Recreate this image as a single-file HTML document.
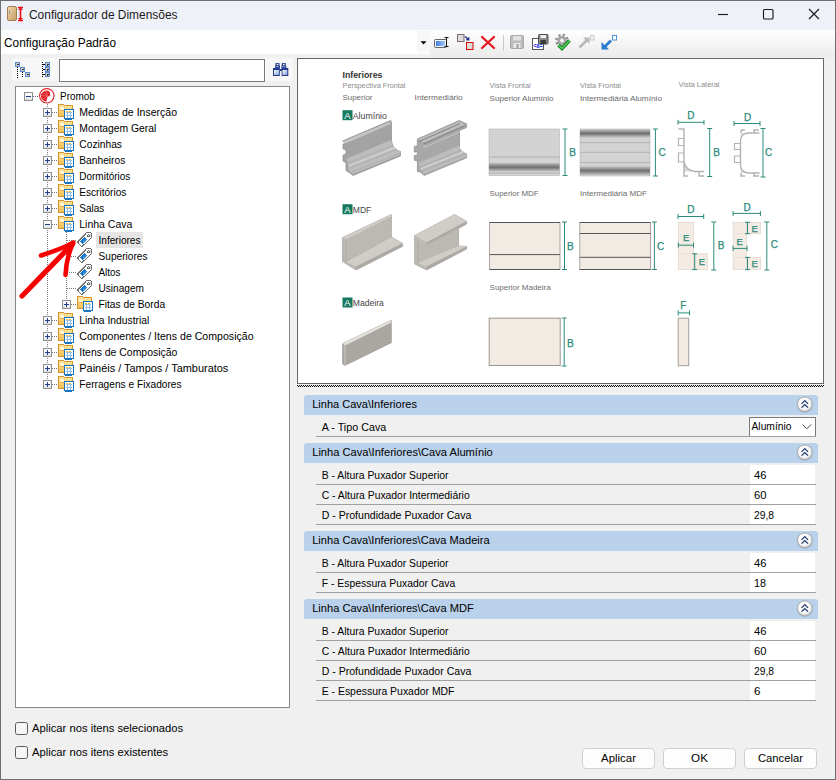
<!DOCTYPE html><html><head><meta charset="utf-8"><style>html,body{margin:0;padding:0;background:#f0f0f0;width:836px;height:780px;overflow:hidden}svg{display:block}text{font-family:"Liberation Sans",sans-serif}</style></head><body>
<svg width="836" height="780" viewBox="0 0 836 780" shape-rendering="crispEdges">
<defs><linearGradient id="tbg" x1="0" y1="0" x2="0" y2="1"><stop offset="0" stop-color="#ffffff"/><stop offset="1" stop-color="#ebebeb"/></linearGradient><linearGradient id="boxg" x1="0" y1="0" x2="0" y2="1"><stop offset="0" stop-color="#ffffff"/><stop offset="0.5" stop-color="#f3f3f3"/><stop offset="1" stop-color="#dcdcdc"/></linearGradient><pattern id="chk" width="2" height="2" patternUnits="userSpaceOnUse"><rect x="0" y="0" width="1" height="1" fill="#000"/><rect x="1" y="1" width="1" height="1" fill="#000"/></pattern></defs>
<rect x="0" y="0" width="836" height="780" fill="#f0f0f0"/>
<rect x="0" y="0" width="836" height="30" fill="#eff1f8"/>
<rect x="0" y="30" width="836" height="24" fill="#ffffff"/>
<rect x="430" y="30" width="406" height="27" fill="url(#tbg)"/>
<rect x="0.5" y="0.5" width="835" height="779" fill="none" stroke="#6f6f6f" stroke-width="1"/>
<defs><linearGradient id="door" x1="0" y1="0" x2="1" y2="1"><stop offset="0" stop-color="#f3dcb2"/><stop offset="1" stop-color="#c49a62"/></linearGradient></defs>
<rect x="7.5" y="6.5" width="9" height="14" fill="url(#door)" stroke="#a0804f" stroke-width="1" rx="1.5" shape-rendering="geometricPrecision"/>
<rect x="9" y="9.5" width="1.2" height="4" fill="#9aa0a8"/>
<path d="M18 7.5h5M18 20.5h5M20.5 7.5v13" stroke="#e8101a" stroke-width="1.6" fill="none" shape-rendering="geometricPrecision"/>
<path d="M18 10l2.5-2.5 2.5 2.5zM18 18l2.5 2.5 2.5-2.5z" fill="#e8101a" shape-rendering="geometricPrecision"/>
<text x="29" y="19.2" font-size="12" fill="#1b1b1b" textLength="148.5" lengthAdjust="spacingAndGlyphs">Configurador de Dimensões</text>
<g stroke="#1b1b1b" stroke-width="1.15" fill="none" shape-rendering="geometricPrecision"><path d="M718 14.5h10"/><rect x="763.5" y="9.5" width="9.5" height="9.5" rx="1"/><path d="M809 9l10 10M819 9l-10 10"/></g>
<text x="4" y="47" font-size="12" fill="#000" textLength="112" lengthAdjust="spacingAndGlyphs">Configuração Padrão</text>
<rect x="417" y="31" width="13" height="22" fill="#f7f7f7"/>
<path d="M420.5 41.2h6l-3 3.4z" fill="#000" shape-rendering="geometricPrecision"/>
<g shape-rendering="geometricPrecision">
<defs><linearGradient id="blu" x1="0" y1="0" x2="1" y2="0"><stop offset="0" stop-color="#3d7be0"/><stop offset="1" stop-color="#a9c8f5"/></linearGradient></defs>
<rect x="434.5" y="39.5" width="12" height="8" fill="#f4f6fa" stroke="#5d6570" stroke-width="1" rx="1"/>
<rect x="436" y="41" width="9" height="5" fill="url(#blu)"/>
<path d="M444.5 37.5h4M444.5 46.5h4M446.5 37.5v9" stroke="#111" stroke-width="1" fill="none"/>
<rect x="457.5" y="34.5" width="6.5" height="7" fill="#dcdcdc" stroke="#7a6a70" stroke-width="1"/>
<rect x="466.5" y="42.5" width="6.5" height="7" fill="#dcdcdc" stroke="#e00000" stroke-width="1"/>
<path d="M465 36.5l3.5 3M468.8 37.3v2.6h-2.6" stroke="#1a2d8a" stroke-width="1.2" fill="none"/>
<path d="M482 37l12 11M494 37l-12 11" stroke="#e8121c" stroke-width="2.2" fill="none" stroke-linecap="round"/>
<line x1="503.5" y1="35" x2="503.5" y2="51" stroke="#c8c8c8" stroke-width="1"/>
<rect x="510.5" y="35.5" width="13" height="13" fill="#bdbdbd" stroke="#a8a8a8" stroke-width="1" rx="1.5"/>
<rect x="513" y="36" width="8" height="4.5" fill="#e2e2e2"/>
<rect x="513.5" y="43" width="7" height="5" fill="#e8e8e8"/>
<rect x="516.5" y="44" width="2" height="4" fill="#a0a0a0"/>
<rect x="532.5" y="38.5" width="11" height="11" fill="#ffffff" stroke="#555" stroke-width="1"/>
<text x="533.5" y="48" font-size="6.5" fill="#1530e0" font-weight="bold" textLength="9" lengthAdjust="spacingAndGlyphs">&lt;a=</text>
<rect x="538.5" y="34.5" width="9.5" height="9.5" fill="#8c8c8c" stroke="#4a4a4a" stroke-width="1" rx="1"/>
<rect x="540.5" y="35" width="5.5" height="3" fill="#f0f0f0"/>
<rect x="540.5" y="40" width="5.5" height="4" fill="#3a3a3a"/>
<circle cx="562" cy="40.5" r="5.6" fill="none" stroke="#8f8f8f" stroke-width="2.4" stroke-dasharray="2.2 2.2"/>
<circle cx="562" cy="40.5" r="4.6" fill="#a5a5a5"/><circle cx="562" cy="40.5" r="1.9" fill="#f4f4f4"/>
<path d="M558.5 45l3.5 3.5 7.5-8" stroke="#0d7d19" stroke-width="3.4" fill="none"/>
<path d="M558.5 45l3.5 3.5 7.5-8" stroke="#5ad35e" stroke-width="1.5" fill="none"/>
<path d="M579.5 47.5l8-8" stroke="#b8b8b8" stroke-width="2.6"/><path d="M583 37.5h6.5v6.5z" fill="#b8b8b8"/>
<rect x="590.5" y="35.5" width="3.5" height="4.5" fill="#f2f2f2" stroke="#c9c9c9" stroke-width="1"/>
<path d="M611 40.5l-7.5 7.5" stroke="#2a7ad2" stroke-width="2.8"/><path d="M601.5 42v7.5h7.5z" fill="#2a7ad2"/>
<rect x="612.5" y="35.5" width="4" height="4.5" fill="#ffffff" stroke="#4c8fe0" stroke-width="1"/>
</g>
<rect x="12" y="58" width="281" height="23" fill="#f7f7f7" rx="3"/>
<g shape-rendering="crispEdges">
<path d="M17.5 67v11M22.5 72v6" stroke="#000" stroke-width="1" stroke-dasharray="1 1"/>
<path d="M42.5 62v16" stroke="#000" stroke-width="1" stroke-dasharray="1 1"/>
<rect x="15.5" y="62.5" width="4" height="4" fill="#cfcab8" stroke="#5a8ad0" stroke-width="1"/>
<line x1="16.5" y1="64.5" x2="18.5" y2="64.5" stroke="#333" stroke-width="1"/>
<rect x="20.5" y="67.5" width="4" height="4" fill="#cfcab8" stroke="#5a8ad0" stroke-width="1"/>
<line x1="21.5" y1="69.5" x2="23.5" y2="69.5" stroke="#333" stroke-width="1"/>
<rect x="25.5" y="72.5" width="4" height="4" fill="#cfcab8" stroke="#5a8ad0" stroke-width="1"/>
<line x1="26.5" y1="74.5" x2="28.5" y2="74.5" stroke="#333" stroke-width="1"/>
<rect x="45.5" y="62.5" width="4" height="4" fill="#cfcab8" stroke="#5a8ad0" stroke-width="1"/>
<line x1="46.5" y1="64.5" x2="48.5" y2="64.5" stroke="#333" stroke-width="1"/>
<line x1="47.5" y1="63.5" x2="47.5" y2="65.5" stroke="#333" stroke-width="1"/>
<rect x="45.5" y="67.5" width="4" height="4" fill="#cfcab8" stroke="#5a8ad0" stroke-width="1"/>
<line x1="46.5" y1="69.5" x2="48.5" y2="69.5" stroke="#333" stroke-width="1"/>
<line x1="47.5" y1="68.5" x2="47.5" y2="70.5" stroke="#333" stroke-width="1"/>
<rect x="45.5" y="72.5" width="4" height="4" fill="#cfcab8" stroke="#5a8ad0" stroke-width="1"/>
<line x1="46.5" y1="74.5" x2="48.5" y2="74.5" stroke="#333" stroke-width="1"/>
<line x1="47.5" y1="73.5" x2="47.5" y2="75.5" stroke="#333" stroke-width="1"/>
<path d="M43 64.5h2M43 69.5h2M43 74.5h2" stroke="#000" stroke-width="1"/>
</g>
<rect x="59.5" y="59.5" width="205" height="22" fill="#ffffff" stroke="#7a7a7a" stroke-width="1"/>
<defs><linearGradient id="bino" x1="0" y1="0" x2="1" y2="1"><stop offset="0" stop-color="#ffffff"/><stop offset="1" stop-color="#7f9ad8"/></linearGradient></defs>
<g shape-rendering="geometricPrecision"><path d="M275.5 63h4v2.5h0.5v2.5h-0.2v8h-6.8v-8h2v-2.5h0.5z" fill="#213c8c"/><path d="M281.8 63h4v2.5h0.5v2.5h2v8h-6.7v-8h-0.3v-2.5h0.5z" fill="#213c8c"/><rect x="274" y="70" width="5" height="5" fill="url(#bino)"/><rect x="282.5" y="70" width="4.8" height="5" fill="url(#bino)"/><rect x="276.8" y="63.8" width="1.6" height="1.4" fill="#fff"/><rect x="283" y="63.8" width="1.6" height="1.4" fill="#fff"/><rect x="275.5" y="66.2" width="3.5" height="1" fill="#8fa6dc"/><rect x="282" y="66.2" width="3.5" height="1" fill="#8fa6dc"/><rect x="279.5" y="69" width="2.5" height="2" fill="#213c8c"/></g>
<rect x="15.5" y="86.5" width="274" height="621" fill="#ffffff" stroke="#828790" stroke-width="1"/>
<defs><linearGradient id="fold" x1="0" y1="0" x2="0" y2="1"><stop offset="0" stop-color="#fce9a4"/><stop offset="1" stop-color="#f2c257"/></linearGradient><symbol id="folder" viewBox="0 0 16 16"><path d="M0.5 0.5h5.2l1 1.2h7.3v10.3h-13.5z" fill="url(#fold)" stroke="#d8922c" stroke-width="1"/><path d="M1.5 6.5h12" stroke="#e9a94a" stroke-width="1"/><path d="M1.5 2.5h4v3h-4z" fill="#fff6c8"/><rect x="6.25" y="5.25" width="9" height="9.5" rx="1" fill="#ffffff" stroke="#1677c4" stroke-width="1.5"/><path d="M8 8.5h6M8 11.5h6M9 7.5v6M12.5 7.5v6" stroke="#96bde6" stroke-width="1"/><path d="M8 7.3h1.8M10.8 7.3h2.5" stroke="#f3b92a" stroke-width="1"/></symbol><symbol id="tag" viewBox="0 0 16 16"><path d="M0.5 10.1 L9 1.3 Q9.3 0.8 10 0.8 L13.8 0.8 Q14.5 0.8 14.5 1.5 L14.5 5.3 Q14.5 5.8 14 6.2 L4.8 14.8 Z" fill="#ffffff" stroke="#6e6e6e" stroke-width="1" stroke-linejoin="round"/><path d="M10 1.5 L14 1.5 L14 5.5 Z" fill="#dedede"/><path d="M3 9.8 L7.5 5.3 L10 7.8 L5.5 12.3 Z" fill="#1677cc"/><path d="M4.5 10 L8 6.5 M5.5 11 L9 7.5" stroke="#7cc0f5" stroke-width="0.6"/><circle cx="11.4" cy="3.6" r="1.2" fill="#fff" stroke="#555" stroke-width="0.9"/></symbol><symbol id="plus" viewBox="0 0 9 9"><rect x="0.5" y="0.5" width="8" height="8" rx="1" fill="url(#boxg)" stroke="#8e8f8f" stroke-width="1"/><path d="M2 4.5h5M4.5 2v5" stroke="#1f3f8a" stroke-width="1"/></symbol><symbol id="minus" viewBox="0 0 9 9"><rect x="0.5" y="0.5" width="8" height="8" rx="1" fill="url(#boxg)" stroke="#8e8f8f" stroke-width="1"/><path d="M2 4.5h5" stroke="#1f3f8a" stroke-width="1"/></symbol></defs>
<g stroke="#7a7a7a" stroke-width="1" fill="none" stroke-dasharray="1 1">
<path d="M47.5 104v280"/>
<path d="M33 96.5h6"/>
<path d="M66.5 232v72"/>
</g>
<g stroke="#7a7a7a" stroke-width="1" fill="none" stroke-dasharray="1 1">
<path d="M52 112.5h6"/>
<path d="M52 128.5h6"/>
<path d="M52 144.5h6"/>
<path d="M52 160.5h6"/>
<path d="M52 176.5h6"/>
<path d="M52 192.5h6"/>
<path d="M52 208.5h6"/>
<path d="M52 224.5h6"/>
<path d="M67 240.5h10"/>
<path d="M67 256.5h10"/>
<path d="M67 272.5h10"/>
<path d="M67 288.5h10"/>
<path d="M71 304.5h6"/>
<path d="M52 320.5h6"/>
<path d="M52 336.5h6"/>
<path d="M52 352.5h6"/>
<path d="M52 368.5h6"/>
<path d="M52 384.5h6"/>
</g>
<use href="#minus" x="24" y="92" width="9" height="9"/>
<text x="60" y="99.7" font-size="11.5" fill="#000" textLength="34.8" lengthAdjust="spacingAndGlyphs">Promob</text>
<use href="#plus" x="43" y="108" width="9" height="9"/>
<use href="#folder" x="58" y="104" width="16" height="16"/>
<text x="79.3" y="115.7" font-size="11.5" fill="#000" textLength="97.7" lengthAdjust="spacingAndGlyphs">Medidas de Inserção</text>
<use href="#plus" x="43" y="124" width="9" height="9"/>
<use href="#folder" x="58" y="120" width="16" height="16"/>
<text x="79.3" y="131.7" font-size="11.5" fill="#000" textLength="77" lengthAdjust="spacingAndGlyphs">Montagem Geral</text>
<use href="#plus" x="43" y="140" width="9" height="9"/>
<use href="#folder" x="58" y="136" width="16" height="16"/>
<text x="79.3" y="147.7" font-size="11.5" fill="#000" textLength="42.7" lengthAdjust="spacingAndGlyphs">Cozinhas</text>
<use href="#plus" x="43" y="156" width="9" height="9"/>
<use href="#folder" x="58" y="152" width="16" height="16"/>
<text x="79.3" y="163.7" font-size="11.5" fill="#000" textLength="46" lengthAdjust="spacingAndGlyphs">Banheiros</text>
<use href="#plus" x="43" y="172" width="9" height="9"/>
<use href="#folder" x="58" y="168" width="16" height="16"/>
<text x="79.3" y="179.7" font-size="11.5" fill="#000" textLength="51" lengthAdjust="spacingAndGlyphs">Dormitórios</text>
<use href="#plus" x="43" y="188" width="9" height="9"/>
<use href="#folder" x="58" y="184" width="16" height="16"/>
<text x="79.3" y="195.7" font-size="11.5" fill="#000" textLength="47" lengthAdjust="spacingAndGlyphs">Escritórios</text>
<use href="#plus" x="43" y="204" width="9" height="9"/>
<use href="#folder" x="58" y="200" width="16" height="16"/>
<text x="79.3" y="211.7" font-size="11.5" fill="#000" textLength="25" lengthAdjust="spacingAndGlyphs">Salas</text>
<use href="#minus" x="43" y="220" width="9" height="9"/>
<use href="#folder" x="58" y="216" width="16" height="16"/>
<text x="79.3" y="227.7" font-size="11.5" fill="#000" textLength="53" lengthAdjust="spacingAndGlyphs">Linha Cava</text>
<rect x="96" y="232" width="47" height="16" fill="#e5e5e5"/>
<use href="#tag" x="77" y="232" width="16" height="16"/>
<text x="98.5" y="243.7" font-size="11.5" fill="#000" textLength="42" lengthAdjust="spacingAndGlyphs">Inferiores</text>
<use href="#tag" x="77" y="248" width="16" height="16"/>
<text x="98.5" y="259.7" font-size="11.5" fill="#000" textLength="49" lengthAdjust="spacingAndGlyphs">Superiores</text>
<use href="#tag" x="77" y="264" width="16" height="16"/>
<text x="98.5" y="275.7" font-size="11.5" fill="#000" textLength="22" lengthAdjust="spacingAndGlyphs">Altos</text>
<use href="#tag" x="77" y="280" width="16" height="16"/>
<text x="98.5" y="291.7" font-size="11.5" fill="#000" textLength="45.5" lengthAdjust="spacingAndGlyphs">Usinagem</text>
<use href="#plus" x="62" y="300" width="9" height="9"/>
<use href="#folder" x="77" y="296" width="16" height="16"/>
<text x="98.5" y="307.7" font-size="11.5" fill="#000" textLength="66.6" lengthAdjust="spacingAndGlyphs">Fitas de Borda</text>
<use href="#plus" x="43" y="316" width="9" height="9"/>
<use href="#folder" x="58" y="312" width="16" height="16"/>
<text x="79.3" y="323.7" font-size="11.5" fill="#000" textLength="70" lengthAdjust="spacingAndGlyphs">Linha Industrial</text>
<use href="#plus" x="43" y="332" width="9" height="9"/>
<use href="#folder" x="58" y="328" width="16" height="16"/>
<text x="79.3" y="339.7" font-size="11.5" fill="#000" textLength="174.3" lengthAdjust="spacingAndGlyphs">Componentes / Itens de Composição</text>
<use href="#plus" x="43" y="348" width="9" height="9"/>
<use href="#folder" x="58" y="344" width="16" height="16"/>
<text x="79.3" y="355.7" font-size="11.5" fill="#000" textLength="98" lengthAdjust="spacingAndGlyphs">Itens de Composição</text>
<use href="#plus" x="43" y="364" width="9" height="9"/>
<use href="#folder" x="58" y="360" width="16" height="16"/>
<text x="79.3" y="371.7" font-size="11.5" fill="#000" textLength="149" lengthAdjust="spacingAndGlyphs">Painéis / Tampos / Tamburatos</text>
<use href="#plus" x="43" y="380" width="9" height="9"/>
<use href="#folder" x="58" y="376" width="16" height="16"/>
<text x="79.3" y="387.7" font-size="11.5" fill="#000" textLength="102.3" lengthAdjust="spacingAndGlyphs">Ferragens e Fixadores</text>
<g shape-rendering="geometricPrecision"><circle cx="46.8" cy="95.8" r="7.2" fill="#fff" stroke="#e0242b" stroke-width="1.1"/><path d="M46.4 101.5 C43 101 41 98.5 41 96 C41 93 43.5 90.8 47 90.6 L49 91.2 L50.3 92.5 L49.8 93.8 L50.4 95 L49.2 96.4 L47.8 96.3 L47.2 98 Z" fill="#e0242b"/><path d="M47.5 96 L43 92.5 M47.5 96 L41.8 95.5 M47.5 96 L42.5 99.5 M47.5 96 L46 91" stroke="#f58080" stroke-width="0.5"/></g>
<g shape-rendering="geometricPrecision" fill="none" stroke="#f70000" stroke-linecap="round" stroke-linejoin="round"><path d="M22 296 L72.5 244" stroke-width="5.2"/><path d="M73 243 C63 248 52 252 41 255.5" stroke-width="4.6"/><path d="M73 243 C69 252 66 262 65.5 275" stroke-width="4.6"/><path d="M74 242 L69 244 L71.5 247 Z" stroke-width="3" fill="#f70000"/></g>
<rect x="15.5" y="722.5" width="12" height="12" fill="#f6f6f6" stroke="#5a5a5a" stroke-width="1" rx="2" shape-rendering="geometricPrecision"/>
<text x="32" y="731.7" font-size="11.5" fill="#000" textLength="151" lengthAdjust="spacingAndGlyphs">Aplicar nos itens selecionados</text>
<rect x="15.5" y="746.5" width="12" height="12" fill="#f6f6f6" stroke="#5a5a5a" stroke-width="1" rx="2" shape-rendering="geometricPrecision"/>
<text x="32" y="755.7" font-size="11.5" fill="#000" textLength="136.2" lengthAdjust="spacingAndGlyphs">Aplicar nos itens existentes</text>
<defs><radialGradient id="cbtn" cx="0.4" cy="0.35" r="0.7"><stop offset="0" stop-color="#ffffff"/><stop offset="0.7" stop-color="#f4f4f4"/><stop offset="1" stop-color="#d5d5d5"/></radialGradient></defs>
<path d="M304 415 V398 Q304 395 307 395 H815 Q818 395 818 398 V415 Z" fill="#b9d1ea" shape-rendering="geometricPrecision"/>
<text x="312.2" y="408.3" font-size="11.5" fill="#000" textLength="104.8" lengthAdjust="spacingAndGlyphs">Linha Cava\Inferiores</text>
<g shape-rendering="geometricPrecision"><circle cx="804.8" cy="404.8" r="8.1" fill="#8d99a8" opacity="0.45"/><circle cx="804.8" cy="404.2" r="7.3" fill="url(#cbtn)" stroke="#a9a9a9" stroke-width="0.9"/><path d="M801.5999999999999 403.9 L804.8 400.7 L808.0 403.9 M801.5999999999999 407.7 L804.8 404.5 L808.0 407.7" stroke="#1d3470" stroke-width="1.2" fill="none"/></g>
<rect x="749.5" y="417.5" width="66" height="19" fill="#ffffff" stroke="#7a7a7a" stroke-width="1"/>
<text x="751.5" y="430.3" font-size="11.5" fill="#000" textLength="40" lengthAdjust="spacingAndGlyphs">Alumínio</text>
<path d="M802.5 424.5 l4.3 4.3 l4.3 -4.3" stroke="#444" stroke-width="1" fill="none" shape-rendering="geometricPrecision"/>
<text x="321.7" y="430.9" font-size="11.5" fill="#000" textLength="64.6" lengthAdjust="spacingAndGlyphs">A - Tipo Cava</text>
<line x1="316" y1="436.5" x2="816" y2="436.5" stroke="#a0a0a0" stroke-width="1"/>
<path d="M304 463 V446 Q304 443 307 443 H815 Q818 443 818 446 V463 Z" fill="#b9d1ea" shape-rendering="geometricPrecision"/>
<text x="312.2" y="456.3" font-size="11.5" fill="#000" textLength="180.6" lengthAdjust="spacingAndGlyphs">Linha Cava\Inferiores\Cava Alumínio</text>
<g shape-rendering="geometricPrecision"><circle cx="804.8" cy="452.8" r="8.1" fill="#8d99a8" opacity="0.45"/><circle cx="804.8" cy="452.2" r="7.3" fill="url(#cbtn)" stroke="#a9a9a9" stroke-width="0.9"/><path d="M801.5999999999999 451.9 L804.8 448.7 L808.0 451.9 M801.5999999999999 455.7 L804.8 452.5 L808.0 455.7" stroke="#1d3470" stroke-width="1.2" fill="none"/></g>
<rect x="750" y="465" width="65" height="19" fill="#ffffff"/>
<text x="754" y="478.7" font-size="11.5" fill="#000" textLength="12.5" lengthAdjust="spacingAndGlyphs">46</text>
<text x="321.7" y="478.9" font-size="11.5" fill="#000" textLength="126.8" lengthAdjust="spacingAndGlyphs">B - Altura Puxador Superior</text>
<line x1="316" y1="484.5" x2="816" y2="484.5" stroke="#a0a0a0" stroke-width="1"/>
<rect x="750" y="485" width="65" height="19" fill="#ffffff"/>
<text x="754" y="498.7" font-size="11.5" fill="#000" textLength="12.5" lengthAdjust="spacingAndGlyphs">60</text>
<text x="321.7" y="498.9" font-size="11.5" fill="#000" textLength="148" lengthAdjust="spacingAndGlyphs">C - Altura Puxador Intermediário</text>
<line x1="316" y1="504.5" x2="816" y2="504.5" stroke="#a0a0a0" stroke-width="1"/>
<rect x="750" y="505" width="65" height="19" fill="#ffffff"/>
<text x="754" y="518.7" font-size="11.5" fill="#000" textLength="20" lengthAdjust="spacingAndGlyphs">29,8</text>
<text x="321.7" y="518.9" font-size="11.5" fill="#000" textLength="149.6" lengthAdjust="spacingAndGlyphs">D - Profundidade Puxador Cava</text>
<line x1="316" y1="524.5" x2="816" y2="524.5" stroke="#a0a0a0" stroke-width="1"/>
<path d="M304 551 V534 Q304 531 307 531 H815 Q818 531 818 534 V551 Z" fill="#b9d1ea" shape-rendering="geometricPrecision"/>
<text x="312.2" y="544.3" font-size="11.5" fill="#000" textLength="177.5" lengthAdjust="spacingAndGlyphs">Linha Cava\Inferiores\Cava Madeira</text>
<g shape-rendering="geometricPrecision"><circle cx="804.8" cy="540.8000000000001" r="8.1" fill="#8d99a8" opacity="0.45"/><circle cx="804.8" cy="540.2" r="7.3" fill="url(#cbtn)" stroke="#a9a9a9" stroke-width="0.9"/><path d="M801.5999999999999 539.9000000000001 L804.8 536.7 L808.0 539.9000000000001 M801.5999999999999 543.7 L804.8 540.5 L808.0 543.7" stroke="#1d3470" stroke-width="1.2" fill="none"/></g>
<rect x="750" y="553" width="65" height="19" fill="#ffffff"/>
<text x="754" y="566.7" font-size="11.5" fill="#000" textLength="12.5" lengthAdjust="spacingAndGlyphs">46</text>
<text x="321.7" y="566.9" font-size="11.5" fill="#000" textLength="126.8" lengthAdjust="spacingAndGlyphs">B - Altura Puxador Superior</text>
<line x1="316" y1="572.5" x2="816" y2="572.5" stroke="#a0a0a0" stroke-width="1"/>
<rect x="750" y="573" width="65" height="19" fill="#ffffff"/>
<text x="754" y="586.7" font-size="11.5" fill="#000" textLength="12" lengthAdjust="spacingAndGlyphs">18</text>
<text x="321.7" y="586.9" font-size="11.5" fill="#000" textLength="133.5" lengthAdjust="spacingAndGlyphs">F - Espessura Puxador Cava</text>
<line x1="316" y1="592.5" x2="816" y2="592.5" stroke="#a0a0a0" stroke-width="1"/>
<path d="M304 619 V602 Q304 599 307 599 H815 Q818 599 818 602 V619 Z" fill="#b9d1ea" shape-rendering="geometricPrecision"/>
<text x="312.2" y="612.3" font-size="11.5" fill="#000" textLength="161.5" lengthAdjust="spacingAndGlyphs">Linha Cava\Inferiores\Cava MDF</text>
<g shape-rendering="geometricPrecision"><circle cx="804.8" cy="608.8000000000001" r="8.1" fill="#8d99a8" opacity="0.45"/><circle cx="804.8" cy="608.2" r="7.3" fill="url(#cbtn)" stroke="#a9a9a9" stroke-width="0.9"/><path d="M801.5999999999999 607.9000000000001 L804.8 604.7 L808.0 607.9000000000001 M801.5999999999999 611.7 L804.8 608.5 L808.0 611.7" stroke="#1d3470" stroke-width="1.2" fill="none"/></g>
<rect x="750" y="621" width="65" height="19" fill="#ffffff"/>
<text x="754" y="634.7" font-size="11.5" fill="#000" textLength="12.5" lengthAdjust="spacingAndGlyphs">46</text>
<text x="321.7" y="634.9" font-size="11.5" fill="#000" textLength="126.8" lengthAdjust="spacingAndGlyphs">B - Altura Puxador Superior</text>
<line x1="316" y1="640.5" x2="816" y2="640.5" stroke="#a0a0a0" stroke-width="1"/>
<rect x="750" y="641" width="65" height="19" fill="#ffffff"/>
<text x="754" y="654.7" font-size="11.5" fill="#000" textLength="12.5" lengthAdjust="spacingAndGlyphs">60</text>
<text x="321.7" y="654.9" font-size="11.5" fill="#000" textLength="148" lengthAdjust="spacingAndGlyphs">C - Altura Puxador Intermediário</text>
<line x1="316" y1="660.5" x2="816" y2="660.5" stroke="#a0a0a0" stroke-width="1"/>
<rect x="750" y="661" width="65" height="19" fill="#ffffff"/>
<text x="754" y="674.7" font-size="11.5" fill="#000" textLength="20" lengthAdjust="spacingAndGlyphs">29,8</text>
<text x="321.7" y="674.9" font-size="11.5" fill="#000" textLength="149.6" lengthAdjust="spacingAndGlyphs">D - Profundidade Puxador Cava</text>
<line x1="316" y1="680.5" x2="816" y2="680.5" stroke="#a0a0a0" stroke-width="1"/>
<rect x="750" y="681" width="65" height="19" fill="#ffffff"/>
<text x="754" y="694.7" font-size="11.5" fill="#000" textLength="6.5" lengthAdjust="spacingAndGlyphs">6</text>
<text x="321.7" y="694.9" font-size="11.5" fill="#000" textLength="132.8" lengthAdjust="spacingAndGlyphs">E - Espessura Puxador MDF</text>
<line x1="316" y1="700.5" x2="816" y2="700.5" stroke="#a0a0a0" stroke-width="1"/>
<rect x="297" y="385" width="527" height="2" fill="url(#chk)"/>
<rect x="582.5" y="748.5" width="72" height="20" fill="#fdfdfd" stroke="#d0d0d0" stroke-width="1" rx="3.5" shape-rendering="geometricPrecision"/>
<text x="618.5" y="761.8" font-size="11.5" fill="#000" text-anchor="middle" textLength="35" lengthAdjust="spacingAndGlyphs">Aplicar</text>
<rect x="663.5" y="748.5" width="72" height="20" fill="#fdfdfd" stroke="#d0d0d0" stroke-width="1" rx="3.5" shape-rendering="geometricPrecision"/>
<text x="699.5" y="761.8" font-size="11.5" fill="#000" text-anchor="middle" textLength="16.8" lengthAdjust="spacingAndGlyphs">OK</text>
<rect x="744.5" y="748.5" width="72" height="20" fill="#fdfdfd" stroke="#d0d0d0" stroke-width="1" rx="3.5" shape-rendering="geometricPrecision"/>
<text x="780.5" y="761.8" font-size="11.5" fill="#000" text-anchor="middle" textLength="45" lengthAdjust="spacingAndGlyphs">Cancelar</text>
<rect x="297.5" y="58.5" width="526" height="325" fill="#ffffff" stroke="#676767" stroke-width="1"/>
<g shape-rendering="geometricPrecision">
<text x="342.5" y="77.9" font-size="9" fill="#333" font-weight="bold" textLength="40" lengthAdjust="spacingAndGlyphs">Inferiores</text>
<text x="342.5" y="87.5" font-size="7.3" fill="#8c8c8c" textLength="63" lengthAdjust="spacingAndGlyphs">Perspectiva Frontal</text>
<text x="342.5" y="100.2" font-size="8" fill="#6a6a6a" textLength="30" lengthAdjust="spacingAndGlyphs">Superior</text>
<text x="414.6" y="100.2" font-size="8" fill="#6a6a6a" textLength="48" lengthAdjust="spacingAndGlyphs">Intermediário</text>
<text x="489.6" y="88" font-size="7" fill="#8c8c8c" textLength="41" lengthAdjust="spacingAndGlyphs">Vista Frontal</text>
<text x="489.6" y="100.6" font-size="8" fill="#6a6a6a" textLength="64" lengthAdjust="spacingAndGlyphs">Superior Alumínio</text>
<text x="580" y="88" font-size="7" fill="#8c8c8c" textLength="41" lengthAdjust="spacingAndGlyphs">Vista Frontal</text>
<text x="580" y="100.6" font-size="8" fill="#6a6a6a" textLength="82" lengthAdjust="spacingAndGlyphs">Intermediária Alumínio</text>
<text x="678.5" y="86.6" font-size="7" fill="#8c8c8c" textLength="41" lengthAdjust="spacingAndGlyphs">Vista Lateral</text>
<text x="489.6" y="196" font-size="8" fill="#6a6a6a" textLength="49" lengthAdjust="spacingAndGlyphs">Superior MDF</text>
<text x="580" y="196" font-size="8" fill="#6a6a6a" textLength="67" lengthAdjust="spacingAndGlyphs">Intermediária MDF</text>
<text x="489.6" y="290" font-size="8" fill="#6a6a6a" textLength="61" lengthAdjust="spacingAndGlyphs">Superior Madeira</text>
<rect x="342.5" y="110.2" width="10" height="10" fill="#16785f"/>
<text x="347.5" y="118.8" font-size="9.5" fill="#ffffff" text-anchor="middle">A</text>
<text x="352.8" y="118.5" font-size="8.5" fill="#444" textLength="34" lengthAdjust="spacingAndGlyphs">Alumínio</text>
<rect x="342.5" y="204.2" width="10" height="10" fill="#16785f"/>
<text x="347.5" y="212.79999999999998" font-size="9.5" fill="#ffffff" text-anchor="middle">A</text>
<text x="352.8" y="212.5" font-size="8.5" fill="#444" textLength="18.5" lengthAdjust="spacingAndGlyphs">MDF</text>
<rect x="342.5" y="297.5" width="10" height="10" fill="#16785f"/>
<text x="347.5" y="306.1" font-size="9.5" fill="#ffffff" text-anchor="middle">A</text>
<text x="352.8" y="305.8" font-size="8.5" fill="#444" textLength="31" lengthAdjust="spacingAndGlyphs">Madeira</text>
<path d="M342.5 141 L390.5 120.5 L391.5 122 L391.5 140 C392 146 395 150 400.5 151.5 L400.5 156 L353 175.5 L350 173 L346 170.5 L346 163 L343 161 L343 155 L346 154 L346 150 L343 149 L343 144 L346 143.5 Z" fill="#a3a3a3" stroke="#8c8c8c" stroke-width="0.7"/>
<path d="M343 141.5 L390.5 121.5 L390.5 124 L345.5 143.5 Z" fill="#c6c6c6"/>
<path d="M347 158.5 L391 140 C392 146 395 150 400.5 151.5 L400.5 154.5 L353 174 L349 171 C348 166 347.5 162 347 158.5 Z" fill="#bdbdbd"/>
<path d="M348 163 L393 145.5 M350 168 L397 149.5 M352 172 L400.5 153" stroke="#a6a6a6" stroke-width="0.7" fill="none"/>
<path d="M349 166 L395 147.5" stroke="#d6d6d6" stroke-width="1.2" fill="none"/>
<path d="M417.4 139 L459.2 120.5 L466.6 123.8 L466.6 127.5 L459.5 130.5 L459.5 148.5 C460.5 151 463 153 466.6 153.7 L466.6 157.8 L424 175.5 L420.5 172 L417.4 171.5 L417.4 161 L414.3 160.3 L414.3 155.4 L417.4 155 L417.4 152 L414.3 152 L414.3 146.4 L417.4 146 Z" fill="#a8a8a8" stroke="#8c8c8c" stroke-width="0.7"/>
<path d="M418 139.5 L459.2 121.3 L465.5 124.3 L424 142.5 Z" fill="#bdbdbd"/>
<path d="M419 141.5 L460 123.5 M423.5 144 L465.5 125.5" stroke="#7d7d7d" stroke-width="0.9" fill="none"/>
<path d="M424 145.5 L424 147.5 L459.5 132" stroke="#cfcfcf" stroke-width="0.8" fill="none"/>
<path d="M418.5 163 L459.5 145.5 C460.5 151 463 153 466.6 153.7 L466.6 156.5 L424 174 C421 170 419 166 418.5 163 Z" fill="#bcbcbc"/>
<path d="M419 157 L459.5 140 M420 167 L462 150 M422 171 L466 153.5" stroke="#a3a3a3" stroke-width="0.7" fill="none"/>
<path d="M420.5 169 L464 151.5" stroke="#d6d6d6" stroke-width="1.1" fill="none"/>
<rect x="489" y="129" width="70.5" height="46.5" fill="#d3d3d3" stroke="#b5b5b5" stroke-width="0.6"/>
<defs><linearGradient id="band" x1="0" y1="0" x2="0" y2="1"><stop offset="0" stop-color="#bdbdbd"/><stop offset="0.5" stop-color="#6f6f6f"/><stop offset="1" stop-color="#c4c4c4"/></linearGradient></defs>
<line x1="489" y1="157" x2="559.5" y2="157" stroke="#a8a8a8" stroke-width="0.8"/>
<rect x="489" y="163" width="70.5" height="8.5" fill="url(#band)"/>
<line x1="489" y1="173" x2="559.5" y2="173" stroke="#a8a8a8" stroke-width="0.8"/>
<rect x="580" y="129" width="70" height="47" fill="#d3d3d3" stroke="#b5b5b5" stroke-width="0.6"/>
<rect x="580" y="129.5" width="70" height="8" fill="url(#band)"/>
<line x1="580" y1="142.7" x2="650" y2="142.7" stroke="#a8a8a8" stroke-width="0.8"/>
<line x1="580" y1="152.3" x2="650" y2="152.3" stroke="#a8a8a8" stroke-width="0.8"/>
<line x1="580" y1="162.6" x2="650" y2="162.6" stroke="#a8a8a8" stroke-width="0.8"/>
<rect x="580" y="166.5" width="70" height="8.5" fill="url(#band)"/>
<path d="M565 129 V175.5 M562.5 129 H567.5 M562.5 175.5 H567.5" stroke="#2b8a7a" stroke-width="1" fill="none"/>
<text x="572.5" y="156" font-size="10" fill="#2b8a7a" text-anchor="middle" stroke="#2b8a7a" stroke-width="0.25">B</text>
<path d="M655.4 129 V176 M652.9 129 H657.9 M652.9 176 H657.9" stroke="#2b8a7a" stroke-width="1" fill="none"/>
<text x="662" y="156" font-size="10" fill="#2b8a7a" text-anchor="middle" stroke="#2b8a7a" stroke-width="0.25">C</text>
<path d="M678 122.3 H704 M678 119.8 V124.8 M704 119.8 V124.8" stroke="#2b8a7a" stroke-width="1" fill="none"/>
<text x="690.8" y="118.8" font-size="10" fill="#2b8a7a" text-anchor="middle" stroke="#2b8a7a" stroke-width="0.25">D</text>
<path d="M684 163 C685 168 689 171 694 171.5 L684.5 171.5 Z" fill="#d8d8d8"/>
<path d="M678.5 129 H684 V162 C685 167 689 171 695 171.5 H704 M684 162 V176 H688 M699 171.5 V176 H704" stroke="#b2b2b2" stroke-width="1.4" fill="none"/>
<path d="M684 138.5 h-5.5 v7 h5.5 M684 153 h-5.5 v9 h5.5" stroke="#b2b2b2" stroke-width="1.2" fill="none"/>
<path d="M709.7 128.5 V176.5 M707.2 128.5 H712.2 M707.2 176.5 H712.2" stroke="#2b8a7a" stroke-width="1" fill="none"/>
<text x="716.5" y="156.3" font-size="10" fill="#2b8a7a" text-anchor="middle" stroke="#2b8a7a" stroke-width="0.25">B</text>
<path d="M734 123.5 H760 M734 121.0 V126.0 M760 121.0 V126.0" stroke="#2b8a7a" stroke-width="1" fill="none"/>
<text x="747.7" y="121.3" font-size="10" fill="#2b8a7a" text-anchor="middle" stroke="#2b8a7a" stroke-width="0.25">D</text>
<path d="M740.5 139 C741 135 744 133 749 133 L741 133 Z M740.5 167 C741 171 744 173 749 173 L741 173 Z" fill="#d8d8d8"/>
<path d="M759.5 133 H749 C744 133 740.5 136 740.5 141 V165 C740.5 170 744 173 749 173 H759.5 M741 130 V133 M741 130 H745 M741 173 V176 H745 M754 133 V130 H759 M754 173 V176 H759" stroke="#b2b2b2" stroke-width="1.4" fill="none"/>
<path d="M740 143.5 h-5.5 v6 h5.5 M740 156 h-5.5 v6.5 h5.5" stroke="#b2b2b2" stroke-width="1.2" fill="none"/>
<path d="M763 128.5 V177 M760.5 128.5 H765.5 M760.5 177 H765.5" stroke="#2b8a7a" stroke-width="1" fill="none"/>
<text x="768.5" y="155.5" font-size="10" fill="#2b8a7a" text-anchor="middle" stroke="#2b8a7a" stroke-width="0.25">C</text>
<path d="M342.5 237.6 L391.4 214.5 L391.4 237 L402.4 243.3 L402.4 246.4 L356 270 L342.5 261.5 Z" fill="#bcb8b3" stroke="#aca8a3" stroke-width="0.8"/>
<path d="M342.5 237.6 L388.5 216 L391.4 214.5 L391.4 216.5 L346 239.5 Z" fill="#d0ccc7"/>
<path d="M346 239.5 V262 M346 262 L391.4 237 M356 266.5 L402.4 243.3" stroke="#aca8a3" stroke-width="0.8" fill="none"/>
<path d="M356 266.5 L402.4 243.3 L402.4 246.4 L356 270 Z" fill="#aca8a3"/>
<path d="M346 262 L391.4 237 L402.4 243.3 L356 266.5 Z" fill="#d0ccc7"/>
<path d="M414.6 235.5 L454.7 214.5 L466.6 221.3 L466.6 223.9 L458.5 228.5 L458.5 246 L466.6 246.5 L466.6 249 L426.5 270 L414.6 264 Z" fill="#bcb8b3" stroke="#aca8a3" stroke-width="0.8"/>
<path d="M414.6 235.5 L454.7 214.5 L466.6 221.3 L426.5 242.5 Z" fill="#d0ccc7"/>
<path d="M426.5 242.5 L466.6 221.3 L466.6 223.9 L426.5 245 Z" fill="#aca8a3"/>
<path d="M418 263 L458.5 246 L466.6 246.5 L426.5 266.5 Z" fill="#d0ccc7"/>
<path d="M426.5 266.5 L466.6 246.5 L466.6 249 L426.5 270 Z" fill="#aca8a3"/>
<path d="M418 241 V263" stroke="#aca8a3" stroke-width="0.8"/>
<path d="M342.5 343.6 L391.4 320.1 L391.4 342.7 L345 365.5 L342.5 364 Z" fill="#aaa6a1" stroke="#9a968f" stroke-width="0.6"/>
<path d="M342.5 343.6 L391.4 320.1 L391.4 322.5 L345 345.5 Z" fill="#e5e1dc"/>
<path d="M345 345.5 V365.5" stroke="#c6c2bd" stroke-width="1.2"/>
<rect x="489.5" y="222.5" width="70.5" height="47" fill="#f2ebe4" stroke="#9a9590" stroke-width="0.8"/>
<line x1="489.5" y1="222.5" x2="560" y2="222.5" stroke="#555" stroke-width="1"/>
<line x1="489.5" y1="269.5" x2="560" y2="269.5" stroke="#555" stroke-width="1"/>
<line x1="489.5" y1="254.6" x2="560" y2="254.6" stroke="#555" stroke-width="1"/>
<path d="M564.5 222 V269.5 M562.0 222 H567.0 M562.0 269.5 H567.0" stroke="#2b8a7a" stroke-width="1" fill="none"/>
<text x="570.4" y="250" font-size="10" fill="#2b8a7a" text-anchor="middle" stroke="#2b8a7a" stroke-width="0.25">B</text>
<rect x="579.8" y="222.5" width="70.8" height="47" fill="#f2ebe4" stroke="#9a9590" stroke-width="0.8"/>
<line x1="579.8" y1="222.5" x2="650.6" y2="222.5" stroke="#555" stroke-width="1"/>
<line x1="579.8" y1="269.5" x2="650.6" y2="269.5" stroke="#555" stroke-width="1"/>
<line x1="579.8" y1="233.5" x2="650.6" y2="233.5" stroke="#555" stroke-width="1"/>
<line x1="579.8" y1="257.3" x2="650.6" y2="257.3" stroke="#555" stroke-width="1"/>
<path d="M654.4 222 V269.5 M651.9 222 H656.9 M651.9 269.5 H656.9" stroke="#2b8a7a" stroke-width="1" fill="none"/>
<text x="660.6" y="250" font-size="10" fill="#2b8a7a" text-anchor="middle" stroke="#2b8a7a" stroke-width="0.25">C</text>
<rect x="489.2" y="318.2" width="71" height="47.3" fill="#f2ebe4" stroke="#9c968f" stroke-width="1"/>
<path d="M564.2 318 V366 M561.7 318 H566.7 M561.7 366 H566.7" stroke="#2b8a7a" stroke-width="1" fill="none"/>
<text x="570.3" y="346.5" font-size="10" fill="#2b8a7a" text-anchor="middle" stroke="#2b8a7a" stroke-width="0.25">B</text>
<rect x="678.3" y="222.3" width="15.4" height="47.3" fill="#f3ebe4" stroke="#e3d9d0" stroke-width="0.8"/>
<rect x="693.7" y="253.8" width="13.9" height="15.8" fill="#f3ebe4" stroke="#e3d9d0" stroke-width="0.8"/>
<line x1="678.5" y1="253.8" x2="693.5" y2="253.8" stroke="#e6ddd5" stroke-width="0.8"/>
<path d="M678 216.5 H703.7 M678 214.0 V219.0 M703.7 214.0 V219.0" stroke="#2b8a7a" stroke-width="1" fill="none"/>
<text x="690.8" y="212.6" font-size="10" fill="#2b8a7a" text-anchor="middle" stroke="#2b8a7a" stroke-width="0.25">D</text>
<text x="686.2" y="241.3" font-size="9.5" fill="#2b8a7a" text-anchor="middle" stroke="#2b8a7a" stroke-width="0.25">E</text>
<path d="M678.3 245.2 H693.5 M678.3 242.7 V247.7 M693.5 242.7 V247.7" stroke="#2b8a7a" stroke-width="1" fill="none"/>
<text x="701.9" y="265.4" font-size="9.5" fill="#2b8a7a" text-anchor="middle" stroke="#2b8a7a" stroke-width="0.25">E</text>
<path d="M694.7 253.8 V269.6 M692.2 253.8 H697.2 M692.2 269.6 H697.2" stroke="#2b8a7a" stroke-width="1" fill="none"/>
<path d="M713.8 222 V270 M711.3 222 H716.3 M711.3 270 H716.3" stroke="#2b8a7a" stroke-width="1" fill="none"/>
<text x="721.2" y="249.4" font-size="10" fill="#2b8a7a" text-anchor="middle" stroke="#2b8a7a" stroke-width="0.25">B</text>
<rect x="733.1" y="222.3" width="13.7" height="47.3" fill="#f3ebe4" stroke="#e3d9d0" stroke-width="0.8"/>
<rect x="746.8" y="222.3" width="13.7" height="11.4" fill="#f3ebe4" stroke="#e3d9d0" stroke-width="0.8"/>
<rect x="746.8" y="257.4" width="13.7" height="12.2" fill="#f3ebe4" stroke="#e3d9d0" stroke-width="0.8"/>
<line x1="733.5" y1="233.7" x2="746.8" y2="233.7" stroke="#e6ddd5" stroke-width="0.8"/>
<line x1="733.5" y1="257.4" x2="746.8" y2="257.4" stroke="#e6ddd5" stroke-width="0.8"/>
<path d="M733.1 213.4 H760.4 M733.1 210.9 V215.9 M760.4 210.9 V215.9" stroke="#2b8a7a" stroke-width="1" fill="none"/>
<text x="747" y="210.5" font-size="10" fill="#2b8a7a" text-anchor="middle" stroke="#2b8a7a" stroke-width="0.25">D</text>
<text x="754.6" y="232" font-size="9.5" fill="#2b8a7a" text-anchor="middle" stroke="#2b8a7a" stroke-width="0.25">E</text>
<text x="739.7" y="244.5" font-size="9.5" fill="#2b8a7a" text-anchor="middle" stroke="#2b8a7a" stroke-width="0.25">E</text>
<text x="754.6" y="267.3" font-size="9.5" fill="#2b8a7a" text-anchor="middle" stroke="#2b8a7a" stroke-width="0.25">E</text>
<path d="M747.5 222.3 V233.7 M745.0 222.3 H750.0 M745.0 233.7 H750.0" stroke="#2b8a7a" stroke-width="1" fill="none"/>
<path d="M747.5 257.4 V269.6 M745.0 257.4 H750.0 M745.0 269.6 H750.0" stroke="#2b8a7a" stroke-width="1" fill="none"/>
<path d="M733.1 248.4 H747 M733.1 245.9 V250.9 M747 245.9 V250.9" stroke="#2b8a7a" stroke-width="1" fill="none"/>
<path d="M766.8 222 V270 M764.3 222 H769.3 M764.3 270 H769.3" stroke="#2b8a7a" stroke-width="1" fill="none"/>
<text x="774.3" y="247.8" font-size="10" fill="#2b8a7a" text-anchor="middle" stroke="#2b8a7a" stroke-width="0.25">C</text>
<rect x="678.2" y="318.2" width="10.5" height="47.5" fill="#f2ebe4" stroke="#a59f99" stroke-width="1"/>
<path d="M678.2 312.9 H689.5 M678.2 310.4 V315.4 M689.5 310.4 V315.4" stroke="#2b8a7a" stroke-width="1" fill="none"/>
<text x="683.4" y="308.9" font-size="10" fill="#2b8a7a" text-anchor="middle" stroke="#2b8a7a" stroke-width="0.25">F</text>
</g>
</svg></body></html>
